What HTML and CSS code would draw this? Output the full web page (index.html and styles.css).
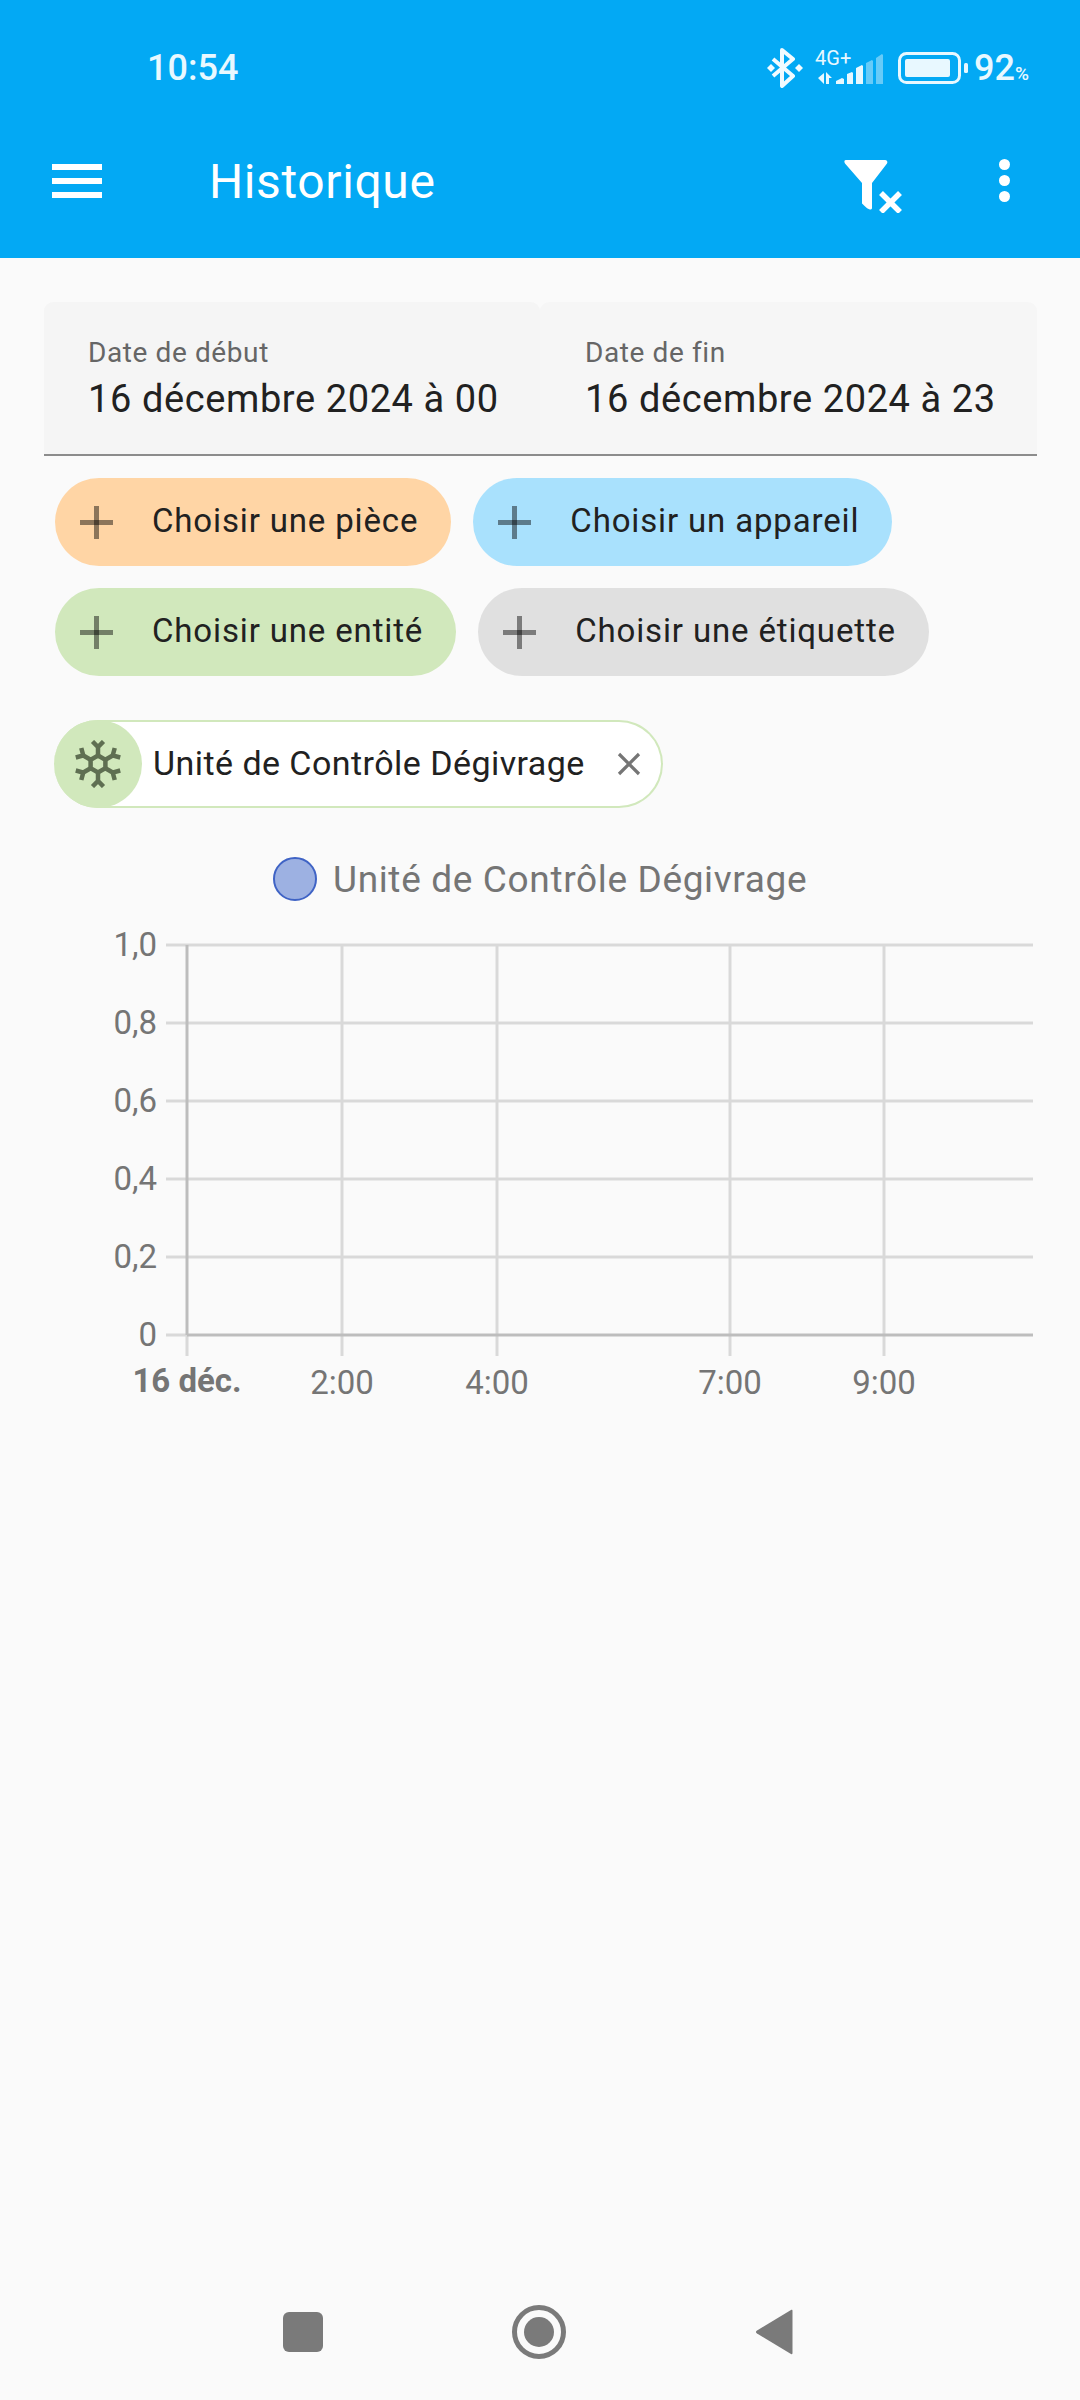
FILE: index.html
```html
<!DOCTYPE html>
<html lang="fr">
<head>
  <meta charset="UTF-8">
  <title>Historique</title>
  <link rel="stylesheet" href="styles.css">
</head>
<body>
  <!-- Barre du haut -->
  <header class="top">
    <div class="status">
      <span class="clock">10:54</span>
      <div class="status-icons">
        <svg class="ic-bt" width="38" height="40" viewBox="0 0 38 40">
          <path d="M7 11l20 17-11 10V2l11 9L7 28" fill="none" stroke="#f2fbff" stroke-width="4" stroke-linejoin="round"/>
          <path d="M1 20l4-4 4 4-4 4zM29 20l4-4 4 4-4 4z" fill="#f2fbff"/>
        </svg>
        <div class="net">
          <span class="net-label">4G+</span>
          <svg width="66" height="30" viewBox="0 0 66 30">
            <path d="M6 19v11l-6-6zM8 18l6 6h-3v6H8z" fill="#e8f8ff"/>
            <path d="M18 30v-3l6-3 2 1v5zM29 30V20l5-2 1 1v11zM38 30V14l6-3 1 1v18z" fill="#e8f8ff"/>
            <path d="M48 30V9l6-3 1 1v23zM58 30V4l6-4 1 1v29z" fill="#fff" opacity=".4"/>
          </svg>
        </div>
        <svg class="ic-batt" width="72" height="32" viewBox="0 0 72 32">
          <rect x="1.500" y="1.500" width="60" height="29" rx="7" fill="none" stroke="#e8f8ff" stroke-width="3"/>
          <rect x="7" y="7" width="45" height="18" rx="2" fill="#e8f8ff"/>
          <rect x="66" y="11" width="4" height="10" rx="1.500" fill="#e8f8ff"/>
        </svg>
        <span class="pct">92<small>%</small></span>
      </div>
    </div>
    <div class="toolbar">
      <div class="burger"><i></i><i></i><i></i></div>
      <h1>Historique</h1>
      <svg class="ic-filter" width="60" height="54" viewBox="0 0 60 54">
        <path d="M2 1h39c2 0 3 2 2 3.500L28 24v25c0 1-1 1.500-2 1.500-2 0-6-4-8-6V24L1 4.500C0 3 0 1 2 1z" fill="#fff"/>
        <path d="M37 34l19 19M56 34L37 53" stroke="#fff" stroke-width="5.500" fill="none"/>
      </svg>
      <div class="dots"><i></i><i></i><i></i></div>
    </div>
  </header>

  <main class="content">
    <!-- Dates -->
    <div class="dates">
      <div class="date-field first">
        <label>Date de début</label>
        <div class="date-value">16 décembre 2024 à 00</div>
      </div>
      <div class="date-field second">
        <label>Date de fin</label>
        <div class="date-value">16 décembre 2024 à 23</div>
      </div>
    </div>

    <!-- Boutons de choix -->
    <div class="pickers">
      <div class="picker orange"><span class="plus"></span>Choisir une pièce</div>
      <div class="picker blue"><span class="plus"></span>Choisir un appareil</div>
      <div class="picker green"><span class="plus"></span>Choisir une entité</div>
      <div class="picker grey"><span class="plus"></span>Choisir une étiquette</div>
    </div>

    <div class="selected">
      <span class="avatar">
        <svg width="46" height="48" viewBox="-23 -24 46 48">
          <g fill="none" stroke="#5f6f52" stroke-width="4.500">
            <polygon points="0,-8.500 7.400,-4.250 7.400,4.250 0,8.500 -7.400,4.250 -7.400,-4.250"/>
            <path d="M0-8v-10M-5.500-22.500L0-17l5.500-5.500"/>
            <path d="M0-8v-10M-5.500-22.500L0-17l5.500-5.500" transform="rotate(60)"/>
            <path d="M0-8v-10M-5.500-22.500L0-17l5.500-5.500" transform="rotate(120)"/>
            <path d="M0-8v-10M-5.500-22.500L0-17l5.500-5.500" transform="rotate(180)"/>
            <path d="M0-8v-10M-5.500-22.500L0-17l5.500-5.500" transform="rotate(240)"/>
            <path d="M0-8v-10M-5.500-22.500L0-17l5.500-5.500" transform="rotate(300)"/>
          </g>
        </svg>
      </span>
      <span class="selected-name">Unité de Contrôle Dégivrage</span>
      <svg class="ic-close" width="24" height="24" viewBox="0 0 24 24">
        <path d="M2 2l20 20M22 2L2 22" stroke="#757575" stroke-width="3.200" fill="none"/>
      </svg>
    </div>

    <div class="legend"><span class="legend-dot"></span>Unité de Contrôle Dégivrage</div>

    <!-- Graphique -->
    <svg class="chart" width="1080" height="490" viewBox="0 0 1080 490">
      <g class="grid">
        <line x1="166" x2="1033" y1="24" y2="24"/>
        <line x1="166" x2="1033" y1="102" y2="102"/>
        <line x1="166" x2="1033" y1="180" y2="180"/>
        <line x1="166" x2="1033" y1="258" y2="258"/>
        <line x1="166" x2="1033" y1="336" y2="336"/>
        <line x1="166" x2="187" y1="414" y2="414"/>
        <line x1="187" x2="187" y1="414" y2="435"/>
        <line x1="342" x2="342" y1="24" y2="435"/>
        <line x1="497" x2="497" y1="24" y2="435"/>
        <line x1="730" x2="730" y1="24" y2="435"/>
        <line x1="884" x2="884" y1="24" y2="435"/>
      </g>
      <g class="axis">
        <line x1="187" x2="187" y1="24" y2="414"/>
        <line x1="187" x2="1033" y1="414" y2="414"/>
      </g>
      <g class="y-labels">
        <text x="157" y="35">1,0</text>
        <text x="157" y="113">0,8</text>
        <text x="157" y="191">0,6</text>
        <text x="157" y="269">0,4</text>
        <text x="157" y="347">0,2</text>
        <text x="157" y="425">0</text>
      </g>
      <g class="x-labels">
        <text class="day" x="187" y="471">16 déc.</text>
        <text x="342" y="473">2:00</text>
        <text x="497" y="473">4:00</text>
        <text x="730" y="473">7:00</text>
        <text x="884" y="473">9:00</text>
      </g>
    </svg>
  </main>

  <!-- Navigation Android -->
  <nav class="sysnav">
    <span class="nav-square"></span>
    <span class="nav-home"><i></i></span>
    <svg width="38" height="48" viewBox="0 0 38 48">
      <path d="M36 2c1-.5 1.500 0 1.500 1v42c0 1-.5 1.500-1.500 1L2 25.500c-1.500-1-1.500-2 0-3z" fill="#7a7a7a"/>
    </svg>
  </nav>
</body>
</html>
```

FILE: styles.css
```css
/* base */
html, body {
  margin: 0;
  height: 2400px;
}
body {
  position: relative;
  display: flex;
  flex-direction: column;
  background: #fafafa;
  font-family: Roboto, sans-serif;
  color: #212121;
  overflow: hidden;
}

/* === top bar === */
.top {
  height: 258px;
  background: #03a9f4;
  color: #fff;
  box-sizing: border-box;
}
.status {
  display: flex;
  align-items: center;
  justify-content: space-between;
  height: 68px;
  padding: 34px 51px 0 147px;
}
.clock {
  font-size: 36px;
  font-weight: 500;
  color: #e8f8ff;
}
.status-icons {
  display: flex;
  align-items: center;
}
.ic-bt { margin-right: 14px; }
.net {
  position: relative;
  width: 66px;
  height: 30px;
  margin: 2px 14px 0 0;
}
.net svg { display: block; }
.net-label {
  position: absolute;
  left: -3px;
  top: -6px;
  font-size: 20px;
  line-height: 20px;
  color: #e8f8ff;
}
.ic-batt { margin-right: 4px; }
.pct {
  font-size: 36px;
  font-weight: 500;
  color: #e8f8ff;
}
.pct small {
  font-size: 19px;
  font-weight: 500;
}
.toolbar {
  display: flex;
  align-items: center;
  height: 117px;
  padding: 0 0 0 52px;
  margin-top: 20px;
}
.burger {
  display: flex;
  flex-direction: column;
  gap: 8px;
  width: 50px;
}
.burger i {
  height: 6px;
  background: #fff;
}
.toolbar h1 {
  flex: 1;
  margin: 2px 0 0 107px;
  font-size: 48px;
  font-weight: 400;
  letter-spacing: .6px;
}
.ic-filter { margin: 10px 95px 0 0; }
.dots {
  display: flex;
  flex-direction: column;
  gap: 5px;
  margin-right: 70px;
}
.dots i {
  width: 11px;
  height: 11px;
  border-radius: 50%;
  background: #fff;
}

/* === contenu === */
.content {
  padding: 44px 0 0;
}
.dates {
  display: flex;
  margin: 0 43px 0 44px;
  height: 154px;
  border-bottom: 2px solid #8c8c8c;
  box-sizing: border-box;
}
.date-field {
  flex: 1;
  box-sizing: border-box;
  padding: 35px 0 0 44px;
  border-radius: 9px 9px 0 0;
}
.date-field.first { background: #f5f5f5; }
.date-field.second { background: #f6f6f6; padding-left: 45px; }
.date-field label {
  display: block;
  font-size: 28px;
  line-height: 32px;
  color: #666;
  letter-spacing: .6px;
}
.date-value {
  margin-top: 7px;
  font-size: 38px;
  line-height: 46px;
  letter-spacing: .6px;
  color: #212121;
}

/* === boutons === */
.pickers {
  display: flex;
  flex-wrap: wrap;
  gap: 22px;
  margin: 22px 100px 0 55px;
}
.picker {
  display: flex;
  align-items: center;
  height: 88px;
  padding: 0 33px 3px 25px;
  border-radius: 44px;
  box-sizing: border-box;
  font-size: 33px;
  letter-spacing: .85px;
  color: #212121;
}
.orange { background: #ffd5a5; }
.blue { background: #a9e1fd; }
.green { background: #d1e8bc; }
.grey { background: #e0e0e0; }
.plus {
  position: relative;
  width: 33px;
  height: 33px;
  margin: 3px 39px 0 0;
  flex: none;
}
.plus::before, .plus::after {
  content: "";
  position: absolute;
  background: rgba(0, 0, 0, .45);
}
.plus::before { left: 0; right: 0; top: 14px; height: 5px; }
.plus::after { top: 0; bottom: 0; left: 14px; width: 5px; }

/* === appareil choisi === */
.selected {
  display: flex;
  align-items: center;
  width: 609px;
  height: 88px;
  margin: 44px 0 0 54px;
  border: 2px solid #d1e8bc;
  border-left: 0;
  border-radius: 44px;
  box-sizing: border-box;
  background: #fff;
}
.avatar {
  display: flex;
  align-items: center;
  justify-content: center;
  width: 88px;
  height: 88px;
  border-radius: 50%;
  background: #d1e8bc;
  flex: none;
}
.selected-name {
  margin: -3px 0 0 11px;
  font-size: 34px;
  letter-spacing: .45px;
  flex: 1;
  white-space: nowrap;
}
.ic-close { margin-right: 20px; }

/* === légende et graphique === */
.legend {
  display: flex;
  align-items: center;
  height: 44px;
  margin: 49px 0 0 273px;
  font-size: 37px;
  letter-spacing: .65px;
  color: #757575;
}
.legend-dot {
  width: 44px;
  height: 44px;
  margin-right: 16px;
  border: 2px solid #3f63c5;
  border-radius: 50%;
  box-sizing: border-box;
  background: #9db1e2;
}
.chart {
  display: block;
  margin-top: 20px;
}
.grid line {
  stroke: #d9d9d9;
  stroke-width: 3;
}
.axis line {
  stroke: #bdbdbd;
  stroke-width: 3;
}
.y-labels text {
  font-size: 33px;
  fill: #757575;
  text-anchor: end;
}
.x-labels text {
  font-size: 33px;
  fill: #757575;
  text-anchor: middle;
}
.x-labels .day {
  font-weight: 700;
}

/* === navigation === */
.sysnav {
  position: absolute;
  left: 283px;
  top: 2305px;
  display: flex;
  align-items: center;
}
.nav-square {
  width: 40px;
  height: 40px;
  border-radius: 6px;
  background: #7a7a7a;
}
.nav-home {
  display: flex;
  align-items: center;
  justify-content: center;
  width: 54px;
  height: 54px;
  margin: 0 189px;
  border: 5px solid #7a7a7a;
  border-radius: 50%;
  box-sizing: border-box;
}
.nav-home i {
  width: 30px;
  height: 30px;
  border-radius: 50%;
  background: #7a7a7a;
}
```
